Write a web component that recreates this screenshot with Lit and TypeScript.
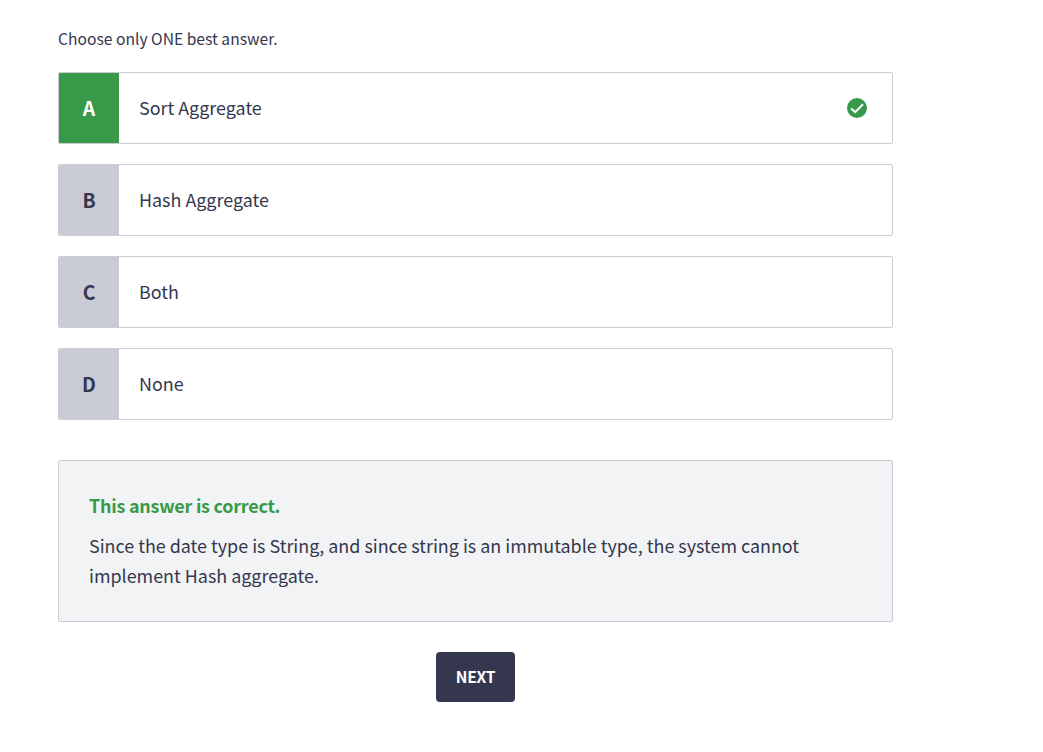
import { LitElement, html, css } from "lit";
import { customElement, property } from "lit/decorators.js";

@customElement("answer-option")
class AnswerOption extends LitElement {
  @property() letter = "";
  @property() label = "";
  @property({ type: Boolean, reflect: true }) correct = false;

  static styles = css`
    :host { display: flex; box-sizing: border-box; height: 72px; border: 1px solid #c9ccd6; border-radius: 2px; background: #fff; overflow: hidden; }
    .letter { display: flex; align-items: center; justify-content: center; width: 60px; background: #c9ccd6; color: #35374f; font-size: 19.4px; line-height: 30px; font-weight: 600; }
    :host([correct]) .letter { background: #389a48; color: #fff; }
    .label { flex: 1; padding: 19px 0 21px 20px; font-size: 17.92px; line-height: 30px; }
    .check { align-self: center; width: 20px; height: 20px; margin-right: 25px; }
  `;

  render() {
    return html`<div class="letter">${this.letter}</div>
      <div class="label">${this.label}</div>
      ${this.correct
        ? html`<svg class="check" viewBox="0 0 20 20"><circle cx="10" cy="10" r="10" fill="#389a48" /><path d="M4.2 10.4l4 3.8 7.8-8" fill="none" stroke="#fff" stroke-width="2" /></svg>`
        : null}`;
  }
}

@customElement("app-root")
class AppRoot extends LitElement {
  static styles = css`
    :host { display: block; box-sizing: border-box; height: 752px; padding: 24px 0 0 58px; background: #fff; color: #35374f; font-family: "Noto Sans CJK JP", sans-serif; font-weight: 400; }
    main { width: 835px; }
    .hint { height: 30px; margin: 0 0 18px; font-size: 15.65px; line-height: 30px; }
    .options { display: grid; gap: 20px; }
    .result { box-sizing: border-box; height: 162px; margin-top: 40px; padding: 29px 30px 31px; border: 1px solid #c9ccd6; border-radius: 2px; background: #f1f3f5; font-size: 17.92px; line-height: 30px; }
    .verdict { margin: 0 0 10px; color: #389a48; font-weight: 700; letter-spacing: -0.22px; }
    .why { margin: 0; }
    .actions { display: flex; justify-content: center; margin-top: 30px; }
    .next { width: 79px; height: 50px; padding: 0 0 2px; border: 0; border-radius: 4px; background: #35374f; color: #fff; font: 600 15.6px "Noto Sans CJK JP", sans-serif; letter-spacing: -0.2px; }
  `;

  render() {
    return html`<main>
      <p class="hint">Choose only ONE best answer.</p>
      <div class="options">
        <answer-option letter="A" label="Sort Aggregate" correct></answer-option>
        <answer-option letter="B" label="Hash Aggregate"></answer-option>
        <answer-option letter="C" label="Both"></answer-option>
        <answer-option letter="D" label="None"></answer-option>
      </div>
      <section class="result">
        <p class="verdict">This answer is correct.</p>
        <p class="why">Since the date type is String, and since string is an immutable type, the system cannot implement Hash aggregate.</p>
      </section>
      <div class="actions"><button class="next">NEXT</button></div>
    </main>`;
  }
}
